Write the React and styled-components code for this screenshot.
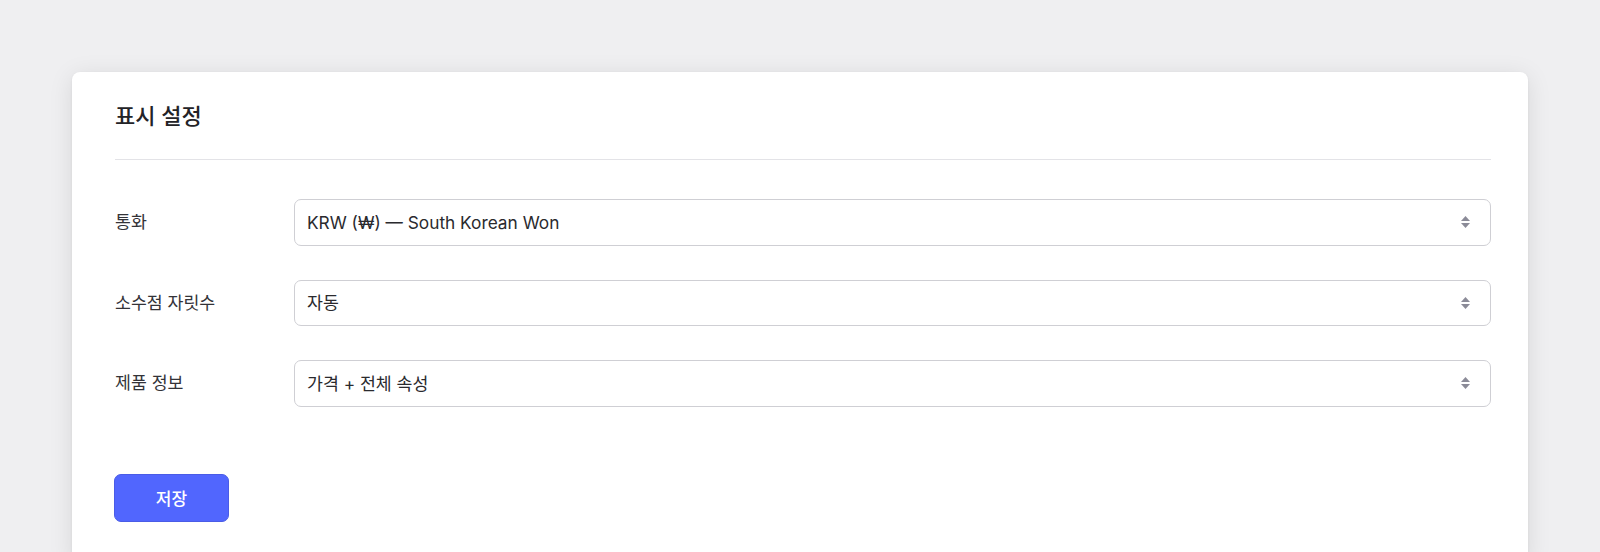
import React, { useState } from "react";
import styled, { createGlobalStyle } from "styled-components";

const GlobalStyle = createGlobalStyle`
  html, body {
    margin: 0;
    padding: 0;
    background: #efeff1;
    font-family: Inter, "Noto Sans CJK KR", "Noto Sans", sans-serif;
    color: #2b2b30;
  }
  * { box-sizing: border-box; }
`;

const Page = styled.div`
  padding: 72px 72px 0 72px;
  height: 552px;
  overflow: hidden;
`;

const Card = styled.section`
  background: #ffffff;
  border-radius: 8px;
  box-shadow: 0 4px 24px rgba(0, 0, 0, 0.1), 0 1px 3px rgba(0, 0, 0, 0.06);
  padding: 30px 37px 40px 43px;
`;

const Title = styled.h2`
  margin: 0;
  font-size: 22px;
  line-height: 28px;
  font-weight: 500;
  color: #232327;
`;

const Divider = styled.hr`
  border: 0;
  height: 1px;
  background: #e3e3e7;
  margin: 29px 0 39px 0;
`;

const Form = styled.div`
  display: grid;
  grid-template-columns: 179px 1fr;
  row-gap: 34px;
  align-items: center;
`;

const Label = styled.label`
  font-size: 17.3px;
  line-height: 22px;
  color: #333338;
`;

const SelectWrap = styled.div`
  position: relative;
  height: 46.5px;
`;

const Select = styled.select`
  appearance: none;
  -webkit-appearance: none;
  width: 100%;
  height: 100%;
  border: 1px solid #cfcfd4;
  border-radius: 7px;
  background: #ffffff;
  padding: 0 40px 0 12px;
  font-family: inherit;
  font-size: 17.3px;
  color: #2a2a2e;
  outline: none;
`;

const Arrows = styled.svg`
  position: absolute;
  right: 20px;
  top: 50%;
  transform: translateY(-50%);
  pointer-events: none;
`;

const Actions = styled.div`
  margin-top: 67px;
`;

const SaveButton = styled.button`
  width: 115px;
  height: 48px;
  margin-left: -1px;
  border: 1px solid #4a5ce6;
  border-radius: 7px;
  background: #5166fe;
  color: #ffffff;
  font-family: inherit;
  font-size: 17px;
  font-weight: 500;
  cursor: pointer;
`;

const UpDown = () => (
  <Arrows width="11" height="13" viewBox="0 0 11 13" aria-hidden="true">
    <path d="M5.5 0.5 L10 5.5 L1 5.5 Z" fill="#8b8b98" />
    <path d="M1 7.5 L10 7.5 L5.5 12.5 Z" fill="#8b8b98" />
  </Arrows>
);

const fields = [
  {
    id: "currency",
    label: "통화",
    value: "krw",
    options: [
      ["krw", "KRW (₩) — South Korean Won"],
      ["usd", "USD ($) — US Dollar"],
      ["eur", "EUR (€) — Euro"],
    ],
  },
  {
    id: "decimals",
    label: "소수점 자릿수",
    value: "auto",
    options: [
      ["auto", "자동"],
      ["0", "0"],
      ["2", "2"],
    ],
  },
  {
    id: "product",
    label: "제품 정보",
    value: "full",
    options: [
      ["full", "가격 + 전체 속성"],
      ["price", "가격만"],
    ],
  },
];

export default function App() {
  const [values, setValues] = useState(
    Object.fromEntries(fields.map((f) => [f.id, f.value]))
  );

  return (
    <>
      <GlobalStyle />
      <Page>
        <Card>
          <Title>표시 설정</Title>
          <Divider />
          <Form>
            {fields.map((f) => (
              <React.Fragment key={f.id}>
                <Label htmlFor={f.id}>{f.label}</Label>
                <SelectWrap>
                  <Select
                    id={f.id}
                    value={values[f.id]}
                    onChange={(e) =>
                      setValues((v) => ({ ...v, [f.id]: e.target.value }))
                    }
                  >
                    {f.options.map(([val, text]) => (
                      <option key={val} value={val}>
                        {text}
                      </option>
                    ))}
                  </Select>
                  <UpDown />
                </SelectWrap>
              </React.Fragment>
            ))}
          </Form>
          <Actions>
            <SaveButton type="button">저장</SaveButton>
          </Actions>
        </Card>
      </Page>
    </>
  );
}
